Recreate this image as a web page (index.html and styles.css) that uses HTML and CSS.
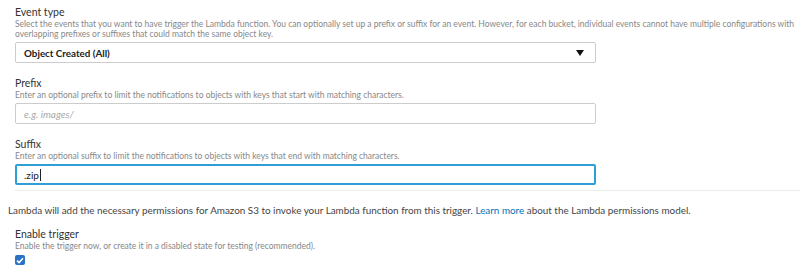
FILE: index.html
```html
<!DOCTYPE html>
<html lang="en">
<head>
  <meta charset="UTF-8" />
  <title>Configure triggers</title>
  <link rel="stylesheet" href="styles.css">
</head>
<body>

  <div class="fields">
    <div class="field">
      <label class="field-label">Event type</label>
      <p class="field-desc">Select the events that you want to have trigger the Lambda function. You can optionally set up a prefix or suffix for an event. However, for each bucket, individual events cannot have multiple configurations with overlapping prefixes or suffixes that could match the same object key.</p>
      <div class="select">
        <span>Object Created (All)</span>
        <svg class="caret-down" width="8" height="6" viewBox="0 0 8 6"><path d="M0 0H8L4 6Z" fill="#111"/></svg>
      </div>
    </div>

    <div class="field">
      <label class="field-label">Prefix</label>
      <p class="field-desc">Enter an optional prefix to limit the notifications to objects with keys that start with matching characters.</p>
      <div class="input"><span class="placeholder">e.g. images/</span></div>
    </div>

    <div class="field">
      <label class="field-label">Suffix</label>
      <p class="field-desc">Enter an optional suffix to limit the notifications to objects with keys that end with matching characters.</p>
      <div class="input focused">.zip<span class="cursor"></span></div>
    </div>
  </div>

  <hr class="divider">

  <p class="note">Lambda will add the necessary permissions for Amazon S3 to invoke your Lambda function from this trigger. <a href="#">Learn more</a> about the Lambda permissions model.</p>

  <div class="fields">
    <div class="field last">
      <label class="field-label">Enable trigger</label>
      <p class="field-desc">Enable the trigger now, or create it in a disabled state for testing (recommended).</p>
      <span class="checkbox">
        <svg width="8" height="7" viewBox="0 0 8 7"><path d="M1 3.6L3 5.6L7 1.2" fill="none" stroke="#fff" stroke-width="1.6"/></svg>
      </span>
    </div>
  </div>

</body>
</html>
```

FILE: styles.css
```css
:root {
  --text: #333;
  --text-muted: #888;
  --border: #ccc;
  --focus: #2e9fd6;
  --link: #0073bb;
  --check: #2a72c3;
}
* {
  box-sizing: border-box;
}
body {
  margin: 0;
  padding: 6px 0 0 0;
  background: #fff;
  color: var(--text);
  font-family: Lato, "Open Sans", sans-serif;
}
.fields {
  padding-left: 15px;
}
.field {
  margin-bottom: 14px;
}
.field.last {
  margin-bottom: 0;
}
.field-label {
  display: block;
  font-size: 10.5px;
  line-height: 13px;
  color: #333;
}
.field-desc {
  margin: 0 0 3px 0;
  font-size: 8.5px;
  line-height: 10px;
  color: var(--text-muted);
}
.select,
.input {
  width: 581px;
  height: 21px;
  border: 1px solid var(--border);
  border-radius: 2px;
  display: flex;
  align-items: center;
  padding: 0 8px;
  font-size: 10px;
}
.select {
  justify-content: space-between;
  font-weight: 700;
  font-size: 9.8px;
  color: #222;
  padding-right: 11px;
}
.placeholder {
  font-style: italic;
  color: #aaa;
}
.input.focused {
  border: 2px solid var(--focus);
  padding-left: 7px;
  color: #222;
}
.cursor {
  display: inline-block;
  width: 1px;
  height: 12px;
  margin-left: 1px;
  background: #222;
}
.divider {
  margin: -9px 0 0 15px;
  border: 0;
  border-top: 1px solid #eaeded;
}
.note {
  margin: 12px 0 11px 8px;
  font-size: 9.9px;
  line-height: 14px;
  color: #444;
}
.note a {
  color: var(--link);
  text-decoration: none;
}
.checkbox {
  display: flex;
  align-items: center;
  justify-content: center;
  width: 10px;
  height: 10px;
  margin-top: 4px;
  border-radius: 2px;
  background: var(--check);
}
```
